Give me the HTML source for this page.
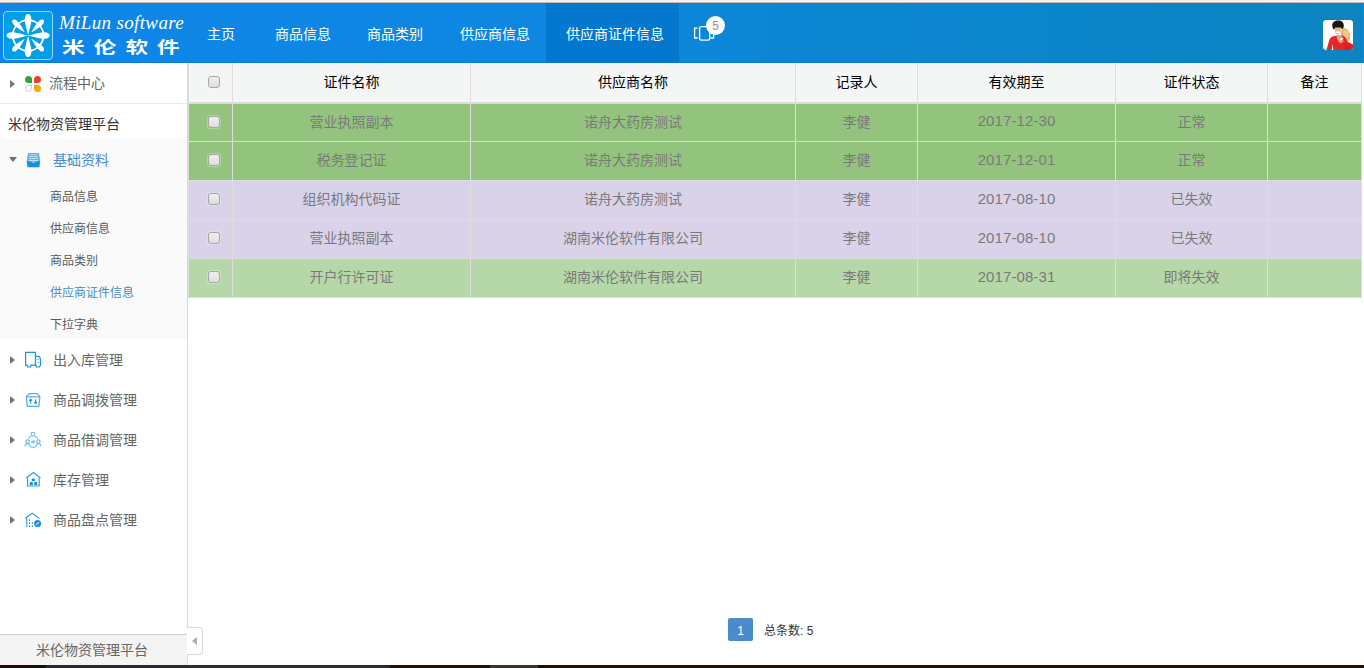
<!DOCTYPE html>
<html lang="zh-CN">
<head>
<meta charset="utf-8">
<title>米伦物资管理平台</title>
<style>
*{box-sizing:border-box;margin:0;padding:0}
html,body{width:1364px;height:668px;overflow:hidden;background:#fff}
body{position:relative;font-family:"Liberation Sans","Noto Sans CJK SC",sans-serif;font-size:14px;color:#333}
.abs{position:absolute}
#topstrip{left:0;top:0;width:1364px;height:3px;background:#f2f2f2;border-bottom:1px solid #c9b9ae}
#header{left:0;top:3px;width:1364px;height:60px;background:linear-gradient(90deg,#0e86ea 0%,#0d87e0 40%,#0c86d2 60%,#0b84c0 100%);border-bottom:1px solid #0a7ad8}
#logo{left:3px;top:8px;width:50px;height:49px;background:#019fe8;border:1px solid #8ddcfa;border-radius:4px}
#brand1{left:59px;top:9.2px;font-family:"Liberation Serif",serif;font-style:italic;font-size:19px;line-height:22px;color:#fff;white-space:nowrap;letter-spacing:0.35px}
#brand2{left:61.8px;top:32px;font-family:"Noto Sans CJK SC",sans-serif;font-weight:700;font-size:18px;line-height:24px;color:#fff;white-space:nowrap;letter-spacing:7.2px;transform:scale(1.258,.9);transform-origin:0 0}
.nav{top:1px;height:59px;line-height:60px;color:#fff;font-size:14px;white-space:nowrap}
#navact{left:546px;top:0;width:133px;height:60px;background:#0477cf}
#avatar{left:1323px;top:17px;width:30px;height:30px;border-radius:4px;background:#fff;overflow:hidden}
/* sidebar */
#side{left:0;top:63px;width:188px;height:602px;background:#fff;border-right:1px solid #d6d9db}
.sitem{left:0;width:187px;height:40px;line-height:42px;color:#666;font-size:14px;white-space:nowrap}
.sitem .t{position:absolute;left:53px;top:0}
.arrR{position:absolute;left:10px;top:16.5px;width:0;height:0;border-left:5px solid #757575;border-top:4px solid transparent;border-bottom:4px solid transparent}
.arrD{position:absolute;left:8.5px;top:18px;width:0;height:0;border-top:5px solid #707070;border-left:4px solid transparent;border-right:4px solid transparent}
.ico{position:absolute}
.sub{left:50px;font-size:12px;line-height:36px;height:32px;color:#5a5a5a;white-space:nowrap}
#sfoot{left:0;top:571px;width:187px;height:31px;background:#f4f4f4;border-top:1px solid #cfcfcf;text-align:center;line-height:30px;color:#666;font-size:14px;padding-right:3px}
#handle{left:187px;top:627px;width:16px;height:28px;background:#fff;border:1px solid #d8d8d8;border-left:none;border-radius:0 4px 4px 0}
#handle i{position:absolute;left:4.5px;top:9px;width:0;height:0;border-right:5px solid #adadad;border-top:4px solid transparent;border-bottom:4px solid transparent}
/* table */
#tbl{left:188px;top:63px;width:1174px;border-collapse:separate;border-spacing:0;table-layout:fixed;font-size:14px}
#tbl th,#tbl td{border-left:1px solid #ddd;text-align:center;font-weight:400;padding:0;overflow:hidden;white-space:nowrap}
#tbl th:last-child,#tbl td:last-child{border-right:1px solid #ddd}
#tbl th{height:41px;background:#f4f6f6;color:#000;border-bottom:2px solid #dcdcdc;padding-bottom:3px}
#tbl td{height:39px;color:#7a7a7a;border-bottom:1px solid #ddd;padding-bottom:4px}
#tbl tr:nth-child(2) td{height:38px}
#tbl td.num{font-size:15px;letter-spacing:.1px}
tr.g1 td{background:#93c47d}
tr.p1 td{background:#d9d2e9}
tr.g2 td{background:#b6d7a8}
.cb{display:inline-block;width:12px;height:12px;border:1px solid #a6a6a6;border-radius:3px;background:linear-gradient(#efefef,#dedede);vertical-align:middle;margin-left:7px;position:relative;top:0px;box-shadow:0 0 1px 1px rgba(255,255,255,.3)}
#pg{left:728px;top:618px;width:25px;height:23px;background:#4a8ccb;border-radius:2px;color:#fff;font-size:12px;line-height:27px;text-align:center}
#tot{left:764px;top:620px;font-size:12px;line-height:23px;color:#333;white-space:nowrap}
#botbar{left:0;top:665px;width:1364px;height:3px;background:linear-gradient(90deg,#1c0f02 0,#1c0f02 46px,#2a2b2f 46px,#2a2b2f 390px,#1e1004 390px,#1e1004 490px,#3b302b 490px,#3b302b 538px,#1e1004 538px)}
</style>
</head>
<body>
<div id="topstrip" class="abs"></div>
<div id="header" class="abs">
  <div id="navact" class="abs"></div>
  <div class="abs" style="left:1363px;top:0;width:1px;height:60px;background:#0d86ec"></div>
  <div id="logo" class="abs"><svg class="abs" style="left:0;top:0" width="48" height="47" viewBox="0 0 48 47"><g transform="translate(24.1,23.5)" fill="#fff"><circle r="15.3" fill="none" stroke="#fff" stroke-width="1.8"/><g id="pt"><path id="p1" d="M0,0C-.9,-5 -3.3,-11 -3.3,-15.5C-3.3,-19.8 -1.7,-21.6 0,-21.6C1.7,-21.6 3.3,-19.8 3.3,-15.5C3.3,-11 .9,-5 0,0Z"/></g><path d="M0,0C-.9,-5 -3.3,-11 -3.3,-15.5C-3.3,-19.8 -1.7,-21.6 0,-21.6C1.7,-21.6 3.3,-19.8 3.3,-15.5C3.3,-11 .9,-5 0,0Z" transform="rotate(90)"/><path d="M0,0C-.9,-5 -3.3,-11 -3.3,-15.5C-3.3,-19.8 -1.7,-21.6 0,-21.6C1.7,-21.6 3.3,-19.8 3.3,-15.5C3.3,-11 .9,-5 0,0Z" transform="rotate(180)"/><path d="M0,0C-.9,-5 -3.3,-11 -3.3,-15.5C-3.3,-19.8 -1.7,-21.6 0,-21.6C1.7,-21.6 3.3,-19.8 3.3,-15.5C3.3,-11 .9,-5 0,0Z" transform="rotate(270)"/><path d="M0,-4.5C-.8,-8 -2.5,-13 -2.5,-17.5C-2.5,-20.6 -1.3,-21.8 0,-21.8C1.3,-21.8 2.5,-20.6 2.5,-17.5C2.5,-13 .8,-8 0,-4.5Z" transform="rotate(45)"/><path d="M0,-4.5C-.8,-8 -2.5,-13 -2.5,-17.5C-2.5,-20.6 -1.3,-21.8 0,-21.8C1.3,-21.8 2.5,-20.6 2.5,-17.5C2.5,-13 .8,-8 0,-4.5Z" transform="rotate(135)"/><path d="M0,-4.5C-.8,-8 -2.5,-13 -2.5,-17.5C-2.5,-20.6 -1.3,-21.8 0,-21.8C1.3,-21.8 2.5,-20.6 2.5,-17.5C2.5,-13 .8,-8 0,-4.5Z" transform="rotate(225)"/><path d="M0,-4.5C-.8,-8 -2.5,-13 -2.5,-17.5C-2.5,-20.6 -1.3,-21.8 0,-21.8C1.3,-21.8 2.5,-20.6 2.5,-17.5C2.5,-13 .8,-8 0,-4.5Z" transform="rotate(315)"/></g></svg></div>
  <div id="brand1" class="abs">MiLun software</div>
  <div id="brand2" class="abs">米伦软件</div>
  <div class="abs nav" style="left:207px">主页</div>
  <div class="abs nav" style="left:275px">商品信息</div>
  <div class="abs nav" style="left:367px">商品类别</div>
  <div class="abs nav" style="left:460px">供应商信息</div>
  <div class="abs nav" style="left:566px">供应商证件信息</div>
  <svg class="abs" style="left:691px;top:22px" width="26" height="18" viewBox="0 0 26 18" fill="none" stroke="#fff" stroke-width="1.3"><path d="M6.6,3.2H3.6V13H6.6"/><path d="M19.6,3.2H22.6V13H19.6"/><rect x="8.6" y="1.7" width="10.2" height="13.4" rx="1.6" fill="#0c86d6"/></svg>
  <div class="abs" style="left:706px;top:13px;width:19px;height:19px;border-radius:50%;background:#fff;color:#a08e84;font-size:12px;line-height:21px;text-align:center">5</div>
  <div id="avatar" class="abs"><svg width="30" height="30" viewBox="0 0 30 30"><rect width="30" height="30" fill="#fff"/><ellipse cx="22.6" cy="15" rx="4.4" ry="7" fill="#e2b565" transform="rotate(-15 22.6 15)"/><ellipse cx="23.2" cy="14" rx="2.6" ry="4.6" fill="#edcb86" transform="rotate(-15 23.2 14)"/><path d="M3.5,30L6,21C6.6,18.4 8,16.8 11,16L19,15.4C22,16 23.6,18 24.2,21.4L30,24.6V30Z" fill="#e6262b"/><path d="M8.6,30L9.4,24L10.4,30Z" fill="#fff"/><ellipse cx="15" cy="10.4" rx="3.2" ry="3.7" fill="#e8b58f"/><path d="M12.8,11.6h4.6v1.5h-4.6z" fill="#fff"/><path d="M9.4,6.5C8.6,2.4 12,.2 15,.6C18.6,.2 21.6,3 20.6,7.2C20.2,8.8 19,9.4 18.4,8.6L17.6,7.4L12.4,7.6L11.2,9.6C10,9.4 9.6,8 9.4,6.5Z" fill="#1d1511"/><path d="M13.6,14.6L18.4,15.6L20.6,21.6L17,23.4L14,19Z" fill="#dba47f"/><path d="M16.6,18.8l3,-1.4l.9,1.7l-3,1.5z" fill="#f8ece6"/><path d="M21,22L30,25.2V30H22Z" fill="#d81f25"/></svg></div>
</div>

<div id="side" class="abs">
  <div class="abs sitem" style="top:0;border-bottom:1px solid #e7e7e7;height:41px;line-height:40px"><i class="arrR"></i><svg class="ico" style="left:25px;top:13px" width="16" height="16" viewBox="0 0 16 16"><path d="M3.5,0A3.5,3.5 0 0 0 3.5,7H7V3.5A3.5,3.5 0 0 0 3.5,0Z" fill="#2ea640"/><path d="M12.5,0A3.5,3.5 0 0 1 12.5,7H9V3.5A3.5,3.5 0 0 1 12.5,0Z" fill="#e8431f"/><path d="M12.5,16A3.5,3.5 0 0 0 12.5,9H9V12.5A3.5,3.5 0 0 0 12.5,16Z" fill="#f2a900"/><path d="M3.5,15.5A3,3 0 0 1 3.5,9.5H6.5V12.5A3,3 0 0 1 3.5,15.5Z" fill="#fff" stroke="#b9cdec" stroke-width="1"/></svg><span class="t" style="left:49px">流程中心</span></div>
  <div class="abs" style="left:8px;top:41px;height:35px;line-height:40px;color:#333;white-space:nowrap">米伦物资管理平台</div>
  <div class="abs" style="left:0;top:76px;width:187px;height:200px;background:#fafafa"></div>
  <div class="abs sitem" style="top:76px;color:#4a8bc9"><i class="arrD"></i><svg class="ico" style="left:26px;top:13px" width="16" height="17" viewBox="0 0 16 17"><path d="M2,1H13L14.2,9.4H.7Z" fill="#58b0ea"/><path d="M3.5,2.3H11.5L12.4,9H2.6Z" fill="#c4e3f8"/><path d="M3.3,3.6H11.7M3.1,5.5H11.9M2.9,7.4H12.1" stroke="#58b0ea" stroke-width="1"/><path d="M.7,9.2H14.2L13.4,15.2H1.5Z" fill="#1a91dc"/><path d="M5.4,9.2H9.6L9,10.8H6Z" fill="#8ccaf0"/></svg><span class="t">基础资料</span></div>
  <div class="abs sub" style="top:116px">商品信息</div>
  <div class="abs sub" style="top:148px">供应商信息</div>
  <div class="abs sub" style="top:180px">商品类别</div>
  <div class="abs sub" style="top:212px;color:#4a8bc9">供应商证件信息</div>
  <div class="abs sub" style="top:244px">下拉字典</div>
  <div class="abs sitem" style="top:276px"><i class="arrR"></i><svg class="ico" style="left:24px;top:12px" width="18" height="18" viewBox="0 0 18 18" fill="none" stroke="#1a92dc" stroke-width="1.2"><path d="M1.6,14.6V1.4H11.4V14.6"/><path d="M11.4,5.4H14.6C15.8,5.4 16.4,7.6 16.6,10V14.4"/><path d="M1.6,14.2L3,14.2L3.6,16H6.4L7,14.2H11.8L12.4,16H15.4L16.4,14.2"/><path d="M11.6,8.4H15.6M11.6,11.4H16.2" stroke="#9fd0f2" stroke-width="1"/></svg><span class="t">出入库管理</span></div>
  <div class="abs sitem" style="top:316px"><i class="arrR"></i><svg class="ico" style="left:25px;top:12.5px" width="16" height="16" viewBox="0 0 16 16" fill="none" stroke="#4faae8" stroke-width="1.2"><path d="M4.2,1.6H12L14.9,4.6L14,13.4Q13.9,14.4 12.9,14.4H3.3Q2.3,14.4 2.2,13.4L1.3,4.6Z"/><path d="M1.4,4.8H14.8"/><path d="M5.6,11.4V7.4M4.2,8.8L5.6,7.2L7,8.8M10.6,7.4V11.4M9.2,10L10.6,11.6L12,10" stroke="#2b99e2" stroke-width="1.2"/></svg><span class="t">商品调拨管理</span></div>
  <div class="abs sitem" style="top:356px"><i class="arrR"></i><svg class="ico" style="left:24px;top:12px" width="18" height="18" viewBox="0 0 18 18" fill="none" stroke="#6fb9ec" stroke-width="1.1"><circle cx="9" cy="3.2" r="1.9"/><circle cx="3.6" cy="10.6" r="1.7"/><circle cx="14.4" cy="10.6" r="1.7"/><path d="M4.4,7.4A5.6,5.6 0 0 1 7.2,5.2M10.8,5.2A5.6,5.6 0 0 1 13.6,7.4M5.4,14.8A5.6,5.6 0 0 0 12.6,14.8"/><path d="M1,15.4C1.2,13.6 2.2,12.6 3.6,12.6C5,12.6 5.8,13.4 6.2,14.6M11.8,14.6C12.2,13.4 13,12.6 14.4,12.6C15.8,12.6 16.8,13.6 17,15.4"/><path d="M7.4,10.3H10.8M9.8,9.3L10.8,10.3M7.2,11.7H10.6" stroke="#4faae8" stroke-width=".9"/></svg><span class="t">商品借调管理</span></div>
  <div class="abs sitem" style="top:396px"><i class="arrR"></i><svg class="ico" style="left:25px;top:12px" width="17" height="17" viewBox="0 0 17 17" fill="none" stroke="#3a9fe3" stroke-width="1.2"><path d="M1.2,7L8.4,1.5L15.6,7"/><path d="M2.6,6.4V15H14.2V6.4"/><g fill="#1a8fdc" stroke="none"><rect x="6.9" y="7.6" width="3" height="2.6" rx=".6"/><rect x="4.8" y="11" width="3" height="3.2" rx=".6"/><rect x="9.2" y="11" width="3" height="3.2" rx=".6"/></g></svg><span class="t">库存管理</span></div>
  <div class="abs sitem" style="top:436px"><i class="arrR"></i><svg class="ico" style="left:24px;top:12.2px" width="18" height="18" viewBox="0 0 18 18" fill="none" stroke="#3a9fe3" stroke-width="1.2"><path d="M1.2,7.2L8.3,2.3L15.4,7.4"/><path d="M2.8,6.6V16"/><g fill="#2b99e2" stroke="none"><rect x="4.9" y="8.2" width="1.3" height="1.8" rx=".5"/><rect x="4.9" y="11.2" width="1.3" height="1.8" rx=".5"/><rect x="4.9" y="14.2" width="1.3" height="1.8" rx=".5"/><rect x="7.7" y="11.2" width="1.3" height="1.8" rx=".5"/><rect x="7.7" y="14.2" width="1.3" height="1.8" rx=".5"/></g><circle cx="13.6" cy="12.6" r="3.5" fill="#1a8fdc" stroke="none"/><path d="M12.2,13.8L15,11.2" stroke="#cfe8f9" stroke-width="1.1"/></svg><span class="t">商品盘点管理</span></div>
  <div id="sfoot" class="abs">米伦物资管理平台</div>
</div>
<div id="handle" class="abs"><i></i></div>

<table id="tbl" class="abs">
  <colgroup><col style="width:44px"><col style="width:238px"><col style="width:325px"><col style="width:122px"><col style="width:198px"><col style="width:152px"><col style="width:95px"></colgroup>
  <tr><th><span class="cb"></span></th><th>证件名称</th><th>供应商名称</th><th>记录人</th><th>有效期至</th><th>证件状态</th><th>备注</th></tr>
  <tr class="g1"><td><span class="cb"></span></td><td>营业执照副本</td><td>诺舟大药房测试</td><td>李健</td><td class="num">2017-12-30</td><td>正常</td><td></td></tr>
  <tr class="g1"><td><span class="cb"></span></td><td>税务登记证</td><td>诺舟大药房测试</td><td>李健</td><td class="num">2017-12-01</td><td>正常</td><td></td></tr>
  <tr class="p1"><td><span class="cb"></span></td><td>组织机构代码证</td><td>诺舟大药房测试</td><td>李健</td><td class="num">2017-08-10</td><td>已失效</td><td></td></tr>
  <tr class="p1"><td><span class="cb"></span></td><td>营业执照副本</td><td>湖南米伦软件有限公司</td><td>李健</td><td class="num">2017-08-10</td><td>已失效</td><td></td></tr>
  <tr class="g2"><td><span class="cb"></span></td><td>开户行许可证</td><td>湖南米伦软件有限公司</td><td>李健</td><td class="num">2017-08-31</td><td>即将失效</td><td></td></tr>
</table>

<div id="pg" class="abs">1</div>
<div id="tot" class="abs">总条数: 5</div>
<div id="botbar" class="abs"></div>
</body>
</html>
